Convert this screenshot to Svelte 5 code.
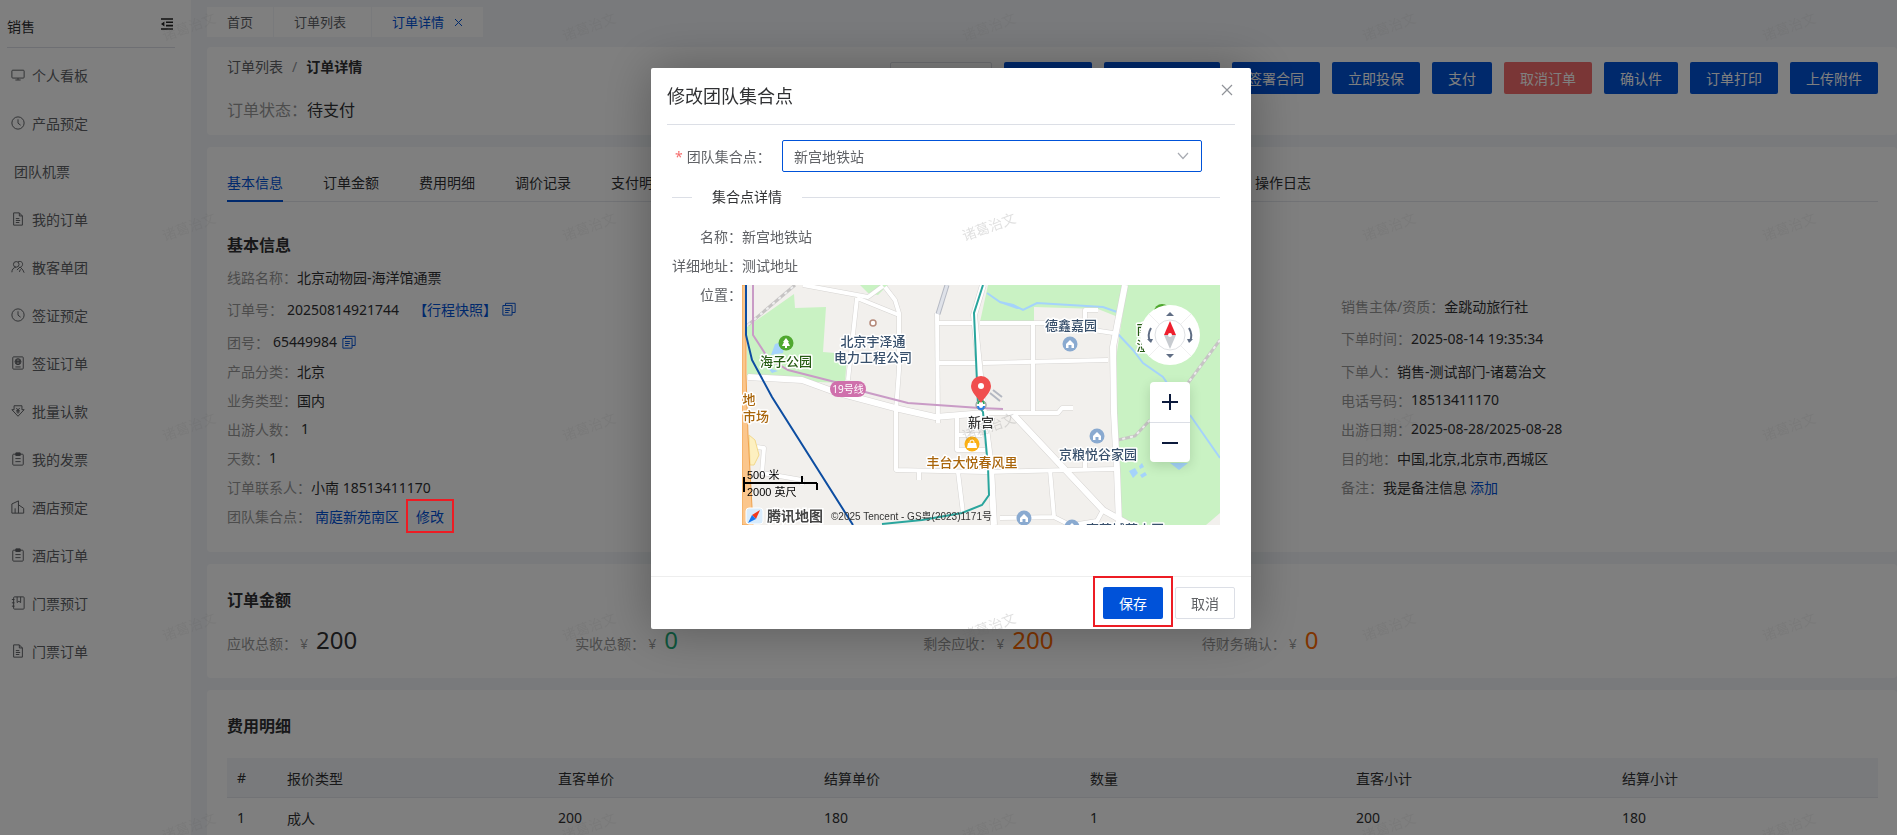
<script lang="ts">
  type Field = { label: string; value: string; link?: string; copy?: boolean; tall?: boolean; spaced?: boolean };

  const menu = [
    { icon: 'monitor', text: '个人看板' },
    { icon: 'clock', text: '产品预定' },
    { icon: '', text: '团队机票' },
    { icon: 'doc', text: '我的订单' },
    { icon: 'users', text: '散客单团' },
    { icon: 'clock', text: '签证预定' },
    { icon: 'passport', text: '签证订单' },
    { icon: 'money', text: '批量认款' },
    { icon: 'clipboard', text: '我的发票' },
    { icon: 'building', text: '酒店预定' },
    { icon: 'clipboard', text: '酒店订单' },
    { icon: 'notebook', text: '门票预订' },
    { icon: 'doc', text: '门票订单' }
  ];

  const actions = [
    { text: '', kind: 'plain w5' },
    { text: '', kind: 'primary w4' },
    { text: '', kind: 'primary w6' },
    { text: '签署合同', kind: 'primary' },
    { text: '立即投保', kind: 'primary' },
    { text: '支付', kind: 'primary' },
    { text: '取消订单', kind: 'danger' },
    { text: '确认件', kind: 'primary' },
    { text: '订单打印', kind: 'primary' },
    { text: '上传附件', kind: 'primary' }
  ];

  const sections = ['基本信息', '订单金额', '费用明细', '调价记录', '支付明细'];

  const leftFields: Field[] = [
    { label: '订单号', value: '20250814921744', link: '【行程快照】', copy: true, tall: true, spaced: true },
    { label: '团号', value: '65449984', copy: true, spaced: true },
    { label: '产品分类', value: '北京' },
    { label: '业务类型', value: '国内' },
    { label: '出游人数', value: '1', spaced: true },
    { label: '天数', value: '1' },
    { label: '订单联系人', value: '小南 18513411170' }
  ];

  const rightFields: Field[] = [
    { label: '销售主体/资质', value: '金跳动旅行社' },
    { label: '下单时间', value: '2025-08-14 19:35:34', tall: true },
    { label: '下单人', value: '销售-测试部门-诸葛治文' },
    { label: '电话号码', value: '18513411170' },
    { label: '出游日期', value: '2025-08-28/2025-08-28' },
    { label: '目的地', value: '中国,北京,北京市,西城区' },
    { label: '备注', value: '我是备注信息', link: '添加' }
  ];

  const amounts = [
    { label: '应收总额', value: '200', tone: 'dark' },
    { label: '实收总额', value: '0', tone: 'green' },
    { label: '剩余应收', value: '200', tone: 'orange' },
    { label: '待财务确认', value: '0', tone: 'orange' }
  ];

  const columns = ['#', '报价类型', '直客单价', '结算单价', '数量', '直客小计', '结算小计'];
  const rows = [['1', '成人', '200', '180', '1', '200', '180']];

  // white streets on the map, drawn twice (casing + fill)
  const roads = [
    'M61 0 126 12 141 1',
    'M115 13 157 30M115 13 106 95',
    'M143 2 153 15 157 28V85L154 125V185L243 187 373 184',
    'M195 28 196 138',
    'M196 38H232M196 78H234',
    'M238 38H305L371 48',
    'M241 78 366 75',
    'M291 38V128',
    'M343 38V25H356',
    'M245 128H316L320 123H331',
    'M215 132V165H243M215 150H240',
    'M216 187 221 228M177 187V195',
    'M308 185 312 232 328 240M258 233 311 232M361 225 355 236 330 240M343 172V184',
    'M15 162 22 163 20 188 60 195V200'
  ];
  const avenues = [
    'M241 0 232 30 235 60 241 120 249 182 252 240',
    'M6 92 60 95 93 107 153 123 193 132 243 128',
    'M383 0 371 62 372 128 375 185 377 240',
    'M270 128 361 225 388 240'
  ];

  let station = $state('新宫地铁站');
  let open = $state(true);
</script>

{#snippet icon(name: string)}
  <svg class="icon" viewBox="0 0 16 16" aria-hidden="true">
    {#if name === 'monitor'}
      <rect x="1" y="2.5" width="14" height="9" rx="1" /><path d="M8 11.5v2M5 13.7h6" />
    {:else if name === 'clock'}
      <circle cx="8" cy="8" r="7" /><path d="M8 3.8v4.4l3 2.3" />
    {:else if name === 'doc'}
      <path d="M3 1h6.5L13 4.5V15H3zM9.5 1v3.5H13M5.5 7.5h4M5.5 9.7h5M5.5 12h4" />
    {:else if name === 'users'}
      <circle cx="6" cy="5" r="3.2" /><path d="M1 14c0-3.2 2-5.4 4.6-5.8M8 2.2c3-1.6 5.6.4 5.2 3-.2 1.6-1.2 2.6-2.4 3M6.8 11.5l3.6-3.6 3.2 3.6 1.4 3M9.6 13.6l1.2-3" />
    {:else if name === 'passport'}
      <rect x="2" y="1" width="12" height="14" rx="1" /><circle cx="8" cy="6.5" r="3.4" /><path d="M4.6 6.5h6.8M8 3.1v6.8M6.4 3.8v5.4M9.6 3.8v5.4M5 12.5h6" />
    {:else if name === 'money'}
      <path d="M3.5 2h9v4.5H15L8 14 1 6.5h2.5zM6 4.5l2 2.3 2-2.3M8 6.8V11M6 7.3h4M6 9h4" />
    {:else if name === 'clipboard'}
      <rect x="2" y="2.5" width="12" height="12.5" rx="1" /><path d="M5 7.5h6M5 11h6" /><path class="solid" d="M5.5 1h5v3h-5z" />
    {:else if name === 'building'}
      <path d="M1 15V4.5L8.5 1v14M8.5 5.5l6 4V15H1M4.7 15V9.5" />
    {:else if name === 'notebook'}
      <rect x="3" y="1" width="12" height="14" rx="1" /><path d="M7 1v6.5l2-1.5 2 1.5V1M1 4h3M1 7.8h3M1 11.6h3" />
    {:else if name === 'copy'}
      <path d="M1 4h10.5v11H1zM4 4V1.5h11V12h-3.5M3.5 7.5H9M3.5 9.7H9M3.5 12h4" />
    {/if}
  </svg>
{/snippet}

{#snippet field(f: Field)}
  <div class="field" class:tall={f.tall}>
    <dt>{f.label}：</dt>
    <dd class:spaced={f.spaced}>{f.value}</dd>
    {#if f.link}
      <a href="#detail" class:wide={f.copy}>{f.link}</a>
    {/if}
    {#if f.copy}
      <button class="copy" aria-label="复制">{@render icon('copy')}</button>
    {/if}
  </div>
{/snippet}

{#snippet house(x: number, y: number)}
  <g transform="translate({x} {y})">
    <circle r="7.5" fill="#8aaad0" />
    <path d="M-4 0 0-4 4 0V4H1.5V1H-1.5V4H-4z" fill="#fff" />
  </g>
{/snippet}

<div class="layout">
  <aside>
    <header class="side-head">
      <span>销售</span>
      <button aria-label="收起菜单">
        <svg width="12" height="12" viewBox="0 0 12 12" aria-hidden="true">
          <path d="M0 1h12M5 4.3h7M5 7.6h7M0 11h12" stroke="#222" stroke-width="1.6" />
          <path d="M0 6 3.4 3.6V8.4z" fill="#222" />
        </svg>
      </button>
    </header>
    <nav class="menu">
      {#each menu as item}
        <a href="#menu" class:bare={!item.icon}>
          {#if item.icon}{@render icon(item.icon)}{/if}
          {item.text}
        </a>
      {/each}
    </nav>
  </aside>

  <main>
    <nav class="page-tabs">
      <a href="#home">首页</a>
      <a href="#list" class="closable">订单列表</a>
      <a href="#detail" class="current">
        订单详情
        <svg width="9" height="9" viewBox="0 0 9 9" aria-hidden="true"><path d="M1 1 8 8M8 1 1 8" stroke="currentColor" /></svg>
      </a>
    </nav>

    <section class="card top">
      <div class="crumbs">
        <div class="path"><a href="#list">订单列表</a><i>/</i><b>订单详情</b></div>
        <div class="status"><span>订单状态：</span>待支付</div>
      </div>
      <div class="actions">
        {#each actions as action}
          <button class="btn {action.kind}">{action.text}</button>
        {/each}
      </div>
    </section>

    <section class="card info">
      <ul class="tabs">
        {#each sections as name, i}
          <li class:active={i === 0}>{name}</li>
        {/each}
        <li class="rest"></li>
        <li>操作日志</li>
      </ul>
      <h2>基本信息</h2>
      <dl>
        {@render field({ label: '线路名称', value: '北京动物园-海洋馆通票' })}
        <div class="cols">
          <div>
            {#each leftFields as f}{@render field(f)}{/each}
            <div class="field">
              <dt>团队集合点：</dt>
              <dd class="spaced"><a href="#place">南庭新苑南区</a></dd>
              <button class="edit" onclick={() => (open = true)}>修改<span class="mark"></span></button>
            </div>
          </div>
          <div></div>
          <div>
            {#each rightFields as f}{@render field(f)}{/each}
          </div>
        </div>
      </dl>
    </section>

    <section class="card sums">
      <h2>订单金额</h2>
      <div class="amounts">
        {#each amounts as a}
          <div><span>{a.label}：</span><span class="yen">¥</span><strong class={a.tone}>{a.value}</strong></div>
        {/each}
      </div>
    </section>

    <section class="card fees">
      <h2>费用明细</h2>
      <table>
        <thead>
          <tr>{#each columns as c}<th>{c}</th>{/each}</tr>
        </thead>
        <tbody>
          {#each rows as r}
            <tr>{#each r as cell}<td>{cell}</td>{/each}</tr>
          {/each}
        </tbody>
      </table>
    </section>
  </main>
</div>

{#if open}
  <div class="overlay">
    <div class="modal" role="dialog" aria-labelledby="modal-title">
      <header>
        <h1 id="modal-title">修改团队集合点</h1>
        <button class="close" aria-label="关闭" onclick={() => (open = false)}>
          <svg width="12" height="12" viewBox="0 0 12 12" aria-hidden="true"><path d="M1 1 11 11M11 1 1 11" stroke="#909399" stroke-width="1.2" /></svg>
        </button>
      </header>

      <div class="body">
        <div class="form-row">
          <label for="station"><em>*</em>团队集合点：</label>
          <div class="select">
            <select id="station" bind:value={station}>
              <option>新宫地铁站</option>
            </select>
            <svg width="12" height="8" viewBox="0 0 12 8" aria-hidden="true"><path d="M1 1 6 6.5 11 1" fill="none" stroke="#a8abb2" stroke-width="1.2" /></svg>
          </div>
        </div>

        <div class="divider"><span>集合点详情</span></div>

        <div class="line"><span>名称：</span><p>{station}</p></div>
        <div class="line"><span>详细地址：</span><p>测试地址</p></div>
        <div class="line">
          <span>位置：</span>
          <div class="map">
            <svg viewBox="0 0 478 240" role="img" aria-label="地图">
              <rect width="478" height="240" fill="#f2f0ed" />
              <g fill="#c9f2c3">
                <path d="M5 42 52 9 53 23 84 22 81 67 105 69 103 98 75 97 5 90z" />
                <path d="M118 0H146L136 10 126 8z" />
                <path d="M246 0H382L376 32 356 24 292 22V36L238 37z" />
                <path d="M385 0H478V228L464 240H380L373 80z" />
              </g>
              <g fill="#a5d3fb">
                <path d="M33 59 43 56 41 68 29 70zM26 83 36 86 30 88z" />
                <path d="M387 186 393 183 396 188 391 193zM397 181l3-3 2 4-4 2zM398 190l5-3 2 3-5 3z" />
                <path d="M428 178H446L437 185z" />
                <path d="M258 18 271 19 281 24 275 24z" />
              </g>
              <path d="M245 8 258 17 271 20 281 25 295 18 361 22 375 27M375 48 391 65 401 78 421 92 425 98M448 130 478 173" fill="none" stroke="#a5d3fb" stroke-width="2" />
              <path d="M6 40 53 0M478 55 446 98M408 135 393 151 376 155" fill="none" stroke="#c6c4c4" stroke-width="3" />
              <path d="M6 40 53 0M478 55 446 98M408 135 393 151 376 155" fill="none" stroke="#eee" stroke-width="2" stroke-dasharray="3 5" />

              <g fill="none" stroke-linejoin="round">
                <g stroke="#d6d4d2" stroke-width="5">{#each roads as d}<path {d} />{/each}</g>
                <g stroke="#d6d4d2" stroke-width="7">{#each avenues as d}<path {d} />{/each}</g>
                <g stroke="#fff" stroke-width="4">{#each roads as d}<path {d} />{/each}</g>
                <g stroke="#fff" stroke-width="6">{#each avenues as d}<path {d} />{/each}</g>
                <path d="M205 0 196 29" stroke="#b4b8c2" stroke-width="5" />
                <path d="M205 0 196 29" stroke="#dfe2e9" stroke-width="3" />
                <path d="M248 108 258 116M251 105 260 112" stroke="#b4b8c2" stroke-width="2" />
              </g>

              <path d="M7 150 13 155 17 170 12 180 8 180z" fill="#fdf0c0" stroke="#f2d88c" />
              <path d="M0 0H4V90L6 150 11 240H0z" fill="#fbc68c" stroke="#f0a24d" />
              <g fill="none" stroke-width="2">
                <path d="M11 0V50L26 73 46 85 93 97 123 107 166 118 238 123 261 124" stroke="#c99bc6" />
                <path d="M4 0V50L10 75 30 112 111 240" stroke="#0d4da1" />
                <path d="M241 0 232 28 236 120 241 127 246 182 247 210 240 220 220 228 180 235 140 239" stroke="#2aa59d" />
              </g>

              <circle cx="131" cy="38" r="3" fill="#fff" stroke="#b58a7a" stroke-width="1.5" />
              <g transform="translate(44 58)">
                <circle r="7.5" fill="#4fa82f" />
                <path d="M0-5 3-1H2L4 3H1V5H-1V3H-4L-2-1H-3z" fill="#fff" />
              </g>
              {@render house(328, 59)}
              {@render house(355, 151)}
              {@render house(282, 233)}
              {@render house(330, 242)}
              <g transform="translate(230 159)">
                <circle r="7.5" fill="#fbb014" />
                <path d="M-4-1H4L5 4H-5z" fill="#fff" />
                <path d="M-2 0V-2A2 2 0 0 1 2-2V0" fill="none" stroke="#fff" />
              </g>
              <circle cx="420" cy="27" r="8" fill="#4fa82f" />

              <rect x="88" y="96" width="36" height="16" rx="8" fill="#cf70ac" />
              <text class="line-no" x="106" y="108">19号线</text>

              <g class="poi">
                <g fill="#265c14">
                  <text x="44" y="81">海子公园</text>
                  <text x="401" y="49">南</text>
                  <text x="401" y="65">湿</text>
                </g>
                <g fill="#38506c">
                  <text x="131" y="61">北京宇泽通</text>
                  <text x="131" y="77">电力工程公司</text>
                  <text x="329" y="45">德鑫嘉园</text>
                  <text x="356" y="174">京粮悦谷家园</text>
                  <text x="383" y="249">嘉苑城苑小区</text>
                </g>
                <g fill="#a9650b">
                  <text x="7" y="119">地</text>
                  <text x="14" y="136">市场</text>
                  <text x="230" y="182">丰台大悦春风里</text>
                </g>
                <text x="239" y="142" fill="#333">新宫</text>
              </g>

              <circle cx="239" cy="120" r="5" fill="#fff" stroke="#8b8b8b" />
              <path d="M236 121A3 3 0 0 0 242 121" fill="none" stroke="#2b7de0" stroke-width="2" />
              <path d="M236 119A3 3 0 0 1 242 119" fill="none" stroke="#27a35a" stroke-width="1.5" />
              <path d="M239 118C235 112 229 107 229 101A10 10 0 0 1 249 101C249 107 243 112 239 118z" fill="#f04e4e" />
              <circle cx="239" cy="101" r="3" fill="#fff" />

              <path d="M2 192V207M2 198H75M60 191V198M75 198V205" fill="none" stroke="#000" stroke-width="2" />
              <g class="scale">
                <text x="5" y="194">500 米</text>
                <text x="5" y="211">2000 英尺</text>
              </g>

              <rect x="4" y="223" width="17" height="16" rx="3" fill="#d9ecfc" stroke="#fff" />
              <path d="M18 225 14 234 10 230z" fill="#f2391d" />
              <path d="M6 238 10 230 14 234z" fill="#1677f0" />
              <text class="brand" x="25" y="236">腾讯地图</text>
              <text class="copyright" x="89" y="235">©2025 Tencent - GS粤(2023)1171号</text>

              <circle cx="428" cy="50" r="30" fill="#fff" />
              <path d="M407 29 449 71M449 29 407 71" stroke="#f0f0f0" />
              <circle cx="428" cy="50" r="15" fill="#fff" stroke="#dfe1e4" />
              <path d="M428 36 434 50H422z" fill="#ee1f2d" />
              <path d="M428 64 434 50H422z" fill="#c7cbd0" />
              <circle cx="428" cy="50" r="2" fill="#fff" />
              <path d="M428 27 432 31H424zM428 73 432 69H424z" fill="#5f6d84" />
              <path d="M409 43Q405 50 408 56M447 43Q451 50 448 56" fill="none" stroke="#5f6d84" stroke-width="2" />
              <path d="M405 54 411 54 409 58zM451 54 445 54 447 58z" fill="#5f6d84" />
            </svg>
            <div class="zoom">
              <button aria-label="放大"><svg width="16" height="16" viewBox="0 0 16 16" aria-hidden="true"><path d="M8 0V16M0 8H16" stroke="#0b1a3c" stroke-width="2" /></svg></button>
              <button aria-label="缩小"><svg width="16" height="16" viewBox="0 0 16 16" aria-hidden="true"><path d="M0 8H16" stroke="#0b1a3c" stroke-width="2" /></svg></button>
            </div>
          </div>
        </div>
      </div>

      <footer>
        <button class="btn primary save">保存<span class="mark"></span></button>
        <button class="btn plain" onclick={() => (open = false)}>取消</button>
      </footer>
    </div>
  </div>
{/if}

<svg class="watermark" aria-hidden="true">
  <defs>
    <pattern id="wm" width="400" height="200" patternUnits="userSpaceOnUse">
      <text transform="translate(189 27) rotate(-20)" text-anchor="middle" y="5">诸葛治文</text>
    </pattern>
  </defs>
  <rect width="100%" height="100%" fill="url(#wm)" />
</svg>

<style>
  :global(body) {
    font-family: 'Noto Sans', 'Noto Sans CJK SC', sans-serif;
    font-size: 14px;
    color: #303133;
    background: #f2f5f8;
  }

  button, select {
    font: inherit;
    color: inherit;
    background: none;
    border: none;
    padding: 0;
    cursor: pointer;
  }

  a { color: #0052d9; text-decoration: none; }

  .layout {
    display: flex;
    gap: 16px;
    height: 100vh;
    overflow: hidden;
  }

  .icon {
    width: 14px;
    height: 14px;
    flex: none;
    fill: none;
    stroke: currentColor;
    stroke-width: 1.1;
  }
  .icon .solid { fill: currentColor; }

  /* sidebar */
  aside {
    width: 191px;
    flex: none;
    background: #fff;
  }

  .side-head {
    display: flex;
    justify-content: space-between;
    align-items: center;
    height: 48px;
    margin: 0 16px 3px 7px;
    padding-top: 5px;
    box-sizing: border-box;
    border-bottom: 1px solid #dcdfe6;
  }
  .side-head button { display: flex; padding: 0 2px 4px; }

  .menu a {
    display: flex;
    align-items: center;
    gap: 7px;
    height: 48px;
    padding-left: 11px;
    color: #606266;
  }
  .menu a.bare { padding-left: 14px; }

  main { flex: 1; min-width: 0; }

  .page-tabs {
    display: flex;
    gap: 1px;
    height: 30px;
    margin: 7px 0 10px;
    font-size: 13px;
    line-height: 30px;
  }
  .page-tabs a { padding: 0 20px; background: #fff; color: #606266; }
  .page-tabs a.closable { padding-right: 25px; }
  .page-tabs a.current {
    display: flex;
    align-items: center;
    gap: 10px;
    color: #0052d9;
  }

  .card {
    background: #fff;
    border-radius: 4px;
    padding: 23px 19px 18px 20px;
    margin-bottom: 12px;
  }
  .card.top {
    display: flex;
    justify-content: space-between;
    padding-top: 10px;
    padding-bottom: 12px;
  }

  .path { line-height: 20px; margin-bottom: 20px; }
  .path a { color: #606266; }
  .path i { margin: 0 9px; font-style: normal; color: #909399; }
  .status { font-size: 16px; line-height: 26px; }
  .status span { color: #999; }

  .actions { display: flex; gap: 12px; margin-top: 5px; }

  .btn {
    height: 32px;
    padding: 0 16px;
    box-sizing: border-box;
    border-radius: 2px;
    white-space: nowrap;
    color: #fff;
  }
  .primary { background: #0052d9; }
  .danger { background: #f56c6c; }
  .plain { background: #fff; color: #606266; border: 1px solid #dcdfe6; padding: 0 15px; }
  .w4 { width: 88px; }
  .w5 { width: 102px; }
  .w6 { width: 116px; }

  .card.info { padding-top: 16px; padding-bottom: 22px; }

  .tabs {
    display: flex;
    gap: 40px;
    margin: 0 0 30px;
    padding: 0;
    list-style: none;
    line-height: 34px;
    border-bottom: 1px solid #e4e7ed;
  }
  .tabs li {
    padding-top: 3px;
    white-space: nowrap;
    border-bottom: 2px solid transparent;
    margin-bottom: -1px;
  }
  .tabs li.active {
    color: #0052d9;
    border-color: #0052d9;
  }
  .tabs .rest { width: 508px; }

  h2 {
    margin: 0 0 15px;
    font-size: 16px;
    line-height: 26px;
    font-weight: 700;
  }
  .info h2 { margin-bottom: 4px; }

  dl { margin: 0; }
  dd { margin: 0; }
  .cols {
    display: grid;
    grid-template-columns: repeat(3, 1fr);
    gap: 20px;
  }
  .field {
    display: flex;
    align-items: center;
    height: 29px;
    white-space: nowrap;
  }
  .field.tall { height: 36px; }
  dt { color: #999; }
  dd.spaced { padding-left: 4px; }
  .field > a { margin-left: 3px; }
  .field > a.wide { margin-left: 14px; }
  .copy {
    display: flex;
    margin-left: 5px;
    color: #0052d9;
  }

  .edit {
    position: relative;
    margin-left: 17px;
    color: #0052d9;
  }
  .mark {
    position: absolute;
    z-index: 20;
    inset: -7px -10px;
    border: 2px solid #ed1c24;
    pointer-events: none;
  }

  /* 24-column row: 5 + 5 + 4 + 10 */
  .amounts {
    display: grid;
    grid-template-columns: repeat(24, 1fr);
    column-gap: 20px;
    height: 32px;
    line-height: 32px;
    color: #999;
    white-space: nowrap;
  }
  .amounts div { grid-column: span 5; }
  .amounts div:nth-child(3) { grid-column: span 4; }
  .yen { margin: 0 8px 0 3px; }
  .amounts strong { font-size: 24px; line-height: 24px; font-weight: 400; }
  .dark { color: #303133; }
  .green { color: #1fae7b; }
  .orange { color: #ff6a00; }

  .fees h2 { margin-bottom: 19px; }
  table {
    width: 100%;
    table-layout: fixed;
    border-collapse: collapse;
    text-align: left;
  }
  th, td {
    height: 39px;
    padding: 0 10px;
    font-weight: 400;
    border-bottom: 1px solid #e4e7ed;
  }
  th { background: #f2f5f8; }
  th:nth-child(1) { width: 30px; }
  th:nth-child(2) { width: 251px; }

  /* dialog */
  .overlay {
    position: fixed;
    inset: 0;
    z-index: 10;
    display: flex;
    justify-content: center;
    align-items: flex-start;
    padding: 68px 0 0 5px;
    background: rgba(0, 0, 0, 0.5);
  }
  .modal {
    width: 600px;
    background: #fff;
    border-radius: 2px;
    box-shadow: 1px 1px 50px rgba(0, 0, 0, 0.3);
    color: #606266;
  }
  .modal header {
    display: flex;
    justify-content: space-between;
    margin: 0 16px;
    height: 56px;
    border-bottom: 1px solid #dcdfe6;
  }
  h1 {
    margin: 0;
    font-size: 18px;
    font-weight: 400;
    line-height: 56px;
    color: #303133;
  }
  .close { align-self: flex-start; padding: 16px 2px; line-height: 0; }

  .body { padding: 15px 31px 51px 21px; }

  .form-row { display: flex; align-items: center; }
  .form-row label { width: 110px; padding-left: 3px; box-sizing: border-box; white-space: nowrap; }
  .form-row em { margin-right: 4px; font-style: normal; color: #f56c6c; }
  .select { position: relative; flex: 1; margin-right: 18px; }
  select {
    display: block;
    width: 100%;
    height: 32px;
    padding: 0 11px;
    appearance: none;
    background: #fff;
    border: 1px solid #0052d9;
    border-radius: 2px;
  }
  .select svg {
    position: absolute;
    right: 13px;
    top: 12px;
    pointer-events: none;
  }

  .divider {
    display: flex;
    align-items: center;
    gap: 20px;
    margin: 15px 0;
    line-height: 20px;
    color: #303133;
  }
  .divider::before, .divider::after {
    content: '';
    width: 20px;
    height: 1px;
    background: #dcdfe6;
  }
  .divider::after { flex: 1; }

  .line { display: flex; line-height: 29px; }
  .line > span { width: 70px; flex: none; text-align: right; }
  .line p { margin: 0; }

  .map { position: relative; flex: 1; margin-top: 5px; }
  .map > svg { display: block; width: 100%; }
  .map text { text-anchor: middle; }
  .poi text {
    font-size: 13px;
    font-weight: 500;
    stroke: #fff;
    stroke-width: 3px;
    stroke-linejoin: round;
    paint-order: stroke;
  }
  .map .line-no { font-size: 10px; fill: #fff; }
  .map .scale text {
    font-family: 'Liberation Sans', 'Noto Sans CJK SC', sans-serif;
    font-size: 11px;
    fill: #000;
    text-anchor: start;
  }
  .map .brand {
    font-size: 14px;
    font-weight: 700;
    fill: #444;
    stroke: #fff;
    stroke-width: 3px;
    paint-order: stroke;
    text-anchor: start;
  }
  .map .copyright {
    font-family: 'Liberation Sans', 'Noto Sans CJK SC', sans-serif;
    font-size: 10px;
    fill: #333;
    text-anchor: start;
  }

  .zoom {
    position: absolute;
    right: 30px;
    top: 97px;
    display: flex;
    flex-direction: column;
    width: 40px;
    background: #fff;
    border-radius: 4px;
    box-shadow: 0 4px 12px rgba(0, 40, 0, 0.15);
  }
  .zoom button {
    display: flex;
    align-items: center;
    justify-content: center;
    height: 40px;
  }
  .zoom button + button { border-top: 1px solid #dcdfe6; }

  footer {
    display: flex;
    justify-content: flex-end;
    gap: 12px;
    padding: 10px 16px;
    border-top: 1px solid #eee;
  }
  .save { position: relative; }
  .save .mark { inset: -11px -10px -8px; }

  .watermark {
    position: fixed;
    inset: 0;
    z-index: 30;
    width: 100%;
    height: 100%;
    pointer-events: none;
  }
  .watermark text { font-size: 14px; fill: rgba(100, 100, 100, 0.2); }
</style>
